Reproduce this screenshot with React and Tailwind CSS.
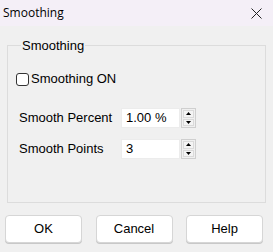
import React, { useState } from "react";

const Spinner = () => (
  <div className="flex flex-col w-[15px] h-[20px] border border-[#cfcfcf] bg-[#f0f0f0] p-[1px] gap-[1px]">
    <div className="flex-1 flex items-center justify-center border border-[#dadada] bg-[#f4f4f4]">
      <svg width="5" height="3" viewBox="0 0 5 3">
        <polygon points="0,3 5,3 2.5,0" fill="#000" />
      </svg>
    </div>
    <div className="flex-1 flex items-center justify-center border border-[#dadada] bg-[#f4f4f4]">
      <svg width="5" height="3" viewBox="0 0 5 3">
        <polygon points="0,0 5,0 2.5,3" fill="#000" />
      </svg>
    </div>
  </div>
);

const NumberRow = ({ label, value }) => (
  <div className="flex items-center h-[20px]">
    <span className="w-[102px]">{label}</span>
    <div className="w-[59px] h-[20px] bg-white border border-[#ececec] flex items-center pl-[4px]">
      {value}
    </div>
    <div className="ml-[1px]">
      <Spinner />
    </div>
  </div>
);

export default function App() {
  const [on, setOn] = useState(false);

  return (
    <div
      className="w-[273px] h-[252px] bg-[#f0f0f0] flex flex-col text-[13px] text-black"
      style={{ fontFamily: '"Liberation Sans", Arial, sans-serif' }}
    >
      {/* title bar */}
      <div className="h-[26px] bg-[#f4eff7] flex items-center justify-between pl-[3px] pr-[11px]">
        <span
          className="text-[12px] leading-none"
          style={{ fontFamily: '"Open Sans", "Noto Sans", sans-serif' }}
        >
          Smoothing
        </span>
        <svg width="11" height="11" viewBox="0 0 11 11">
          <path d="M0.5 0.5 L10.5 10.5 M10.5 0.5 L0.5 10.5" stroke="#222" strokeWidth="1" />
        </svg>
      </div>

      {/* body */}
      <div className="flex-1 flex flex-col px-[7px] pt-[12px]">
        <fieldset className="h-[165px] border border-[#dcdcdc] px-[8px] pt-[18px]">
          <legend className="ml-[5px] px-[1px] leading-[15px]">Smoothing</legend>

          <label className="flex items-center gap-[2px] h-[14px] mt-[1px] cursor-default">
            <span
              onClick={() => setOn(!on)}
              className="w-[13px] h-[13px] rounded-[3px] border border-[#333] bg-white flex items-center justify-center text-[10px]"
            >
              {on ? "✓" : ""}
            </span>
            <span>Smoothing ON</span>
          </label>

          <div className="flex flex-col gap-[11px] mt-[22px] pl-[3px]">
            <NumberRow label="Smooth Percent" value="1.00 %" />
            <NumberRow label="Smooth Points" value="3" />
          </div>
        </fieldset>

        <div className="flex justify-between mt-[12px] pr-[3px] -ml-[2px]">
          {["OK", "Cancel", "Help"].map((t) => (
            <button
              key={t}
              className="w-[77px] h-[28px] bg-white border border-[#d6d6d6] rounded-[4px] shadow-[0_1px_0_#c8c8c8]"
            >
              {t}
            </button>
          ))}
        </div>
      </div>
    </div>
  );
}
